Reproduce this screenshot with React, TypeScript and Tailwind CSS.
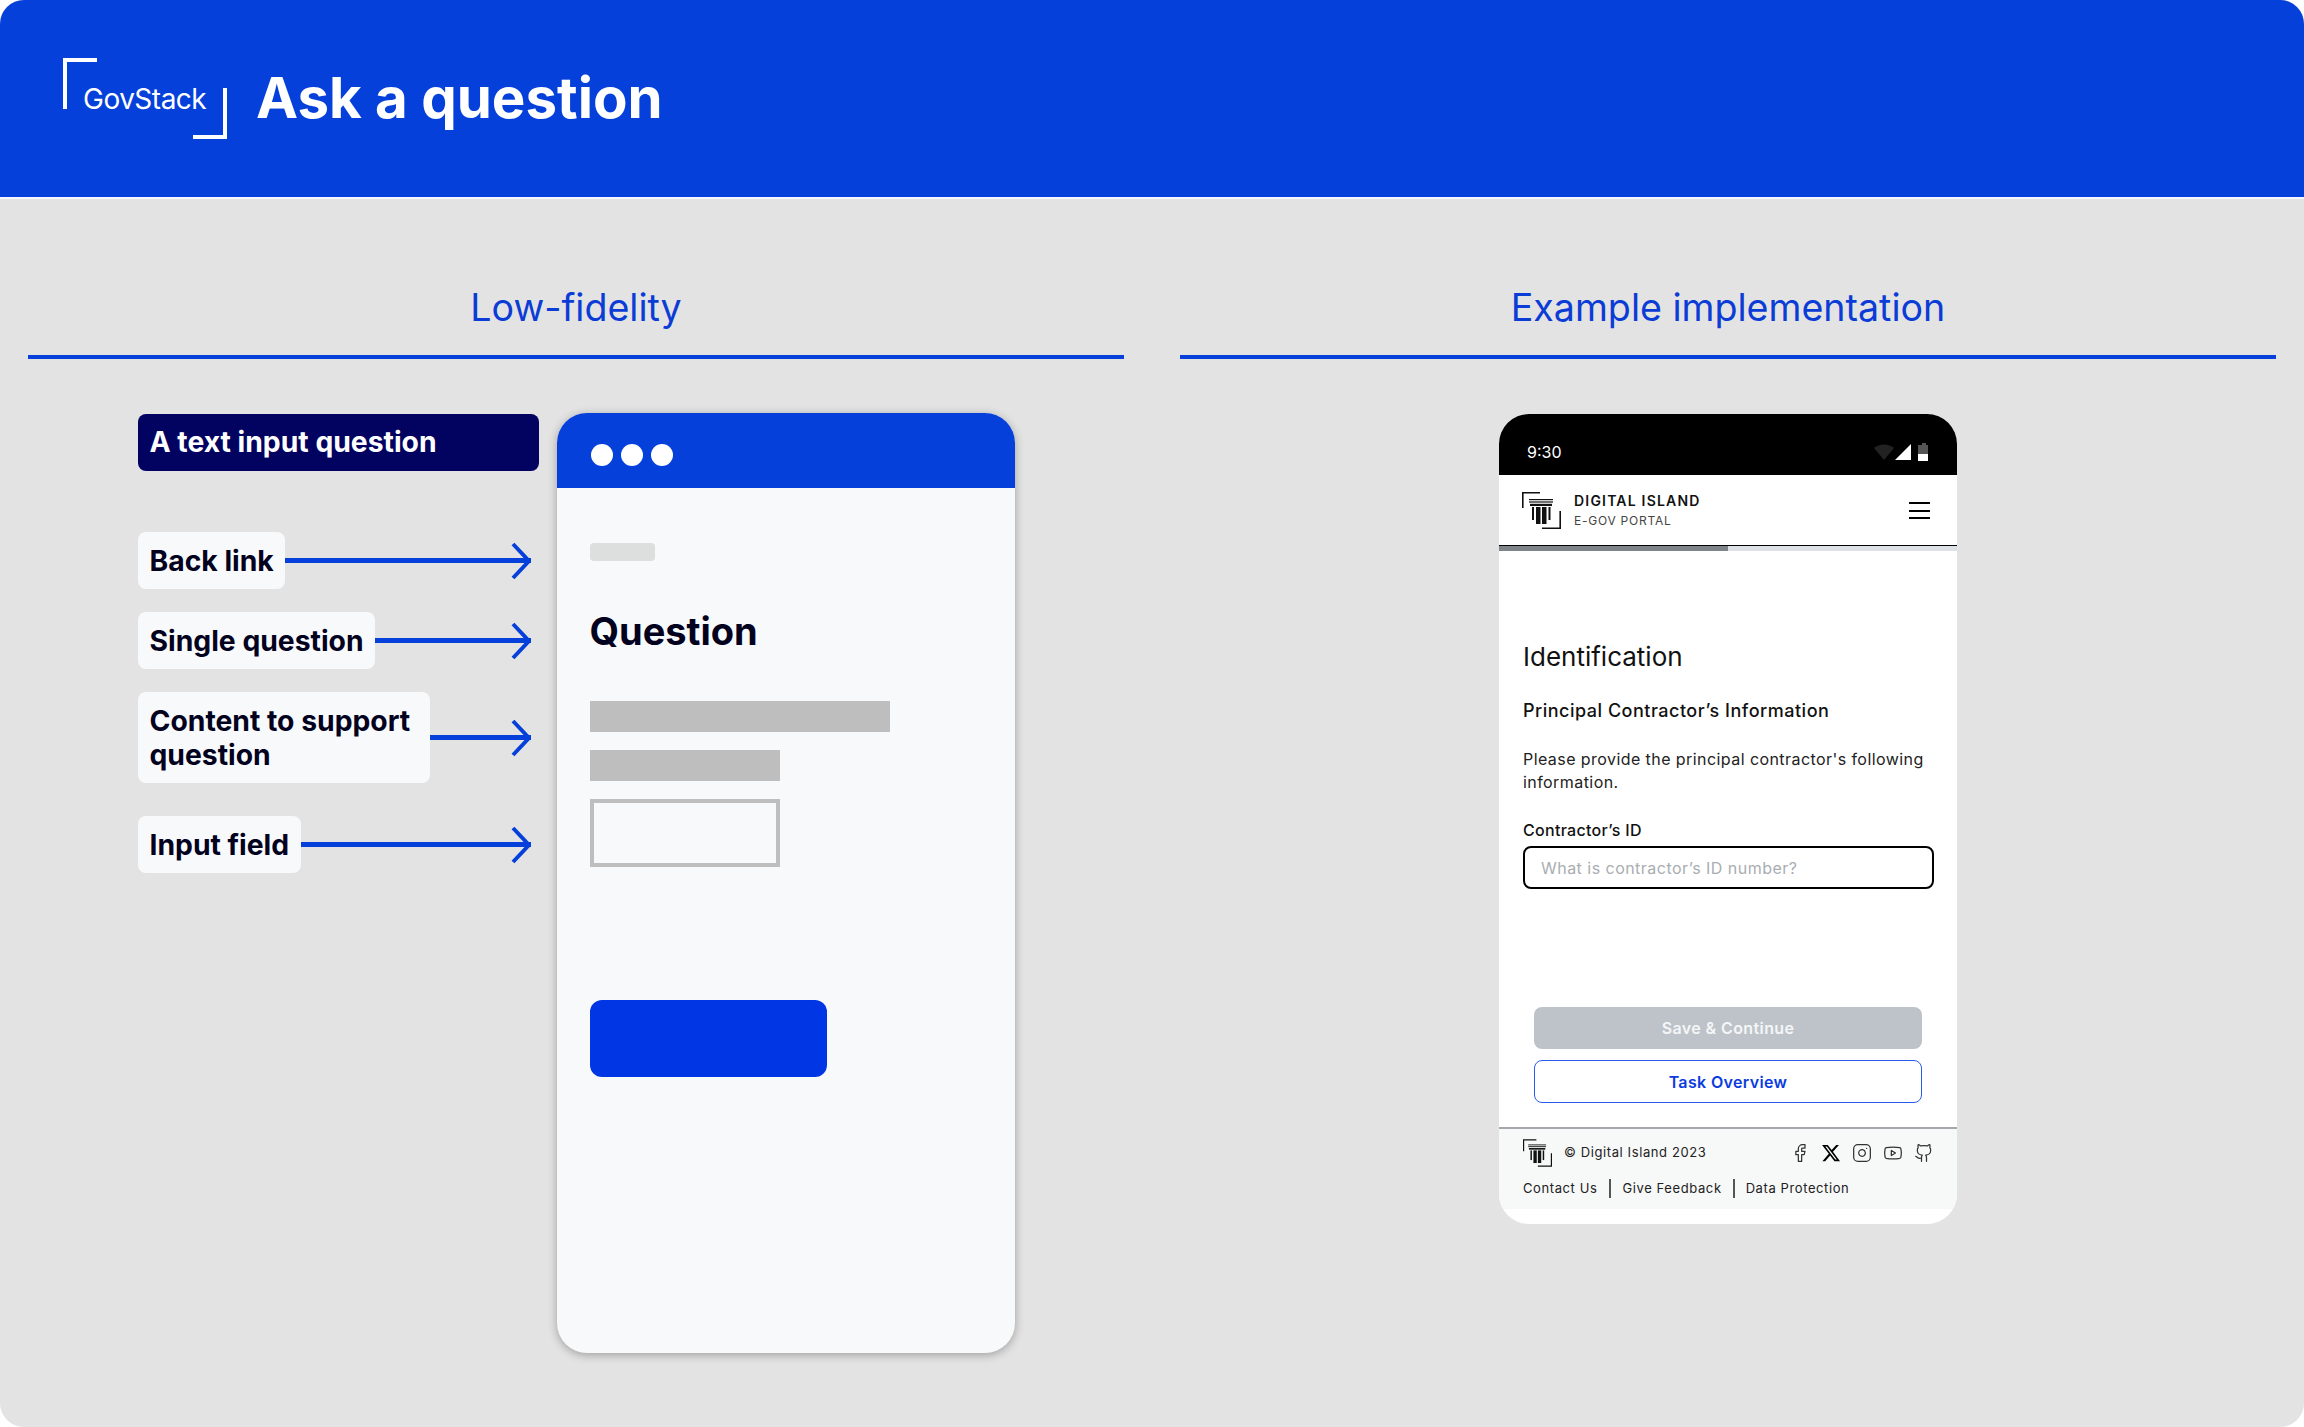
import { Facebook, Instagram, Youtube, Github } from "lucide-react";
import { FaXTwitter } from "react-icons/fa6";

function PortalLogo({ className }: { className: string }) {
  return (
    <svg viewBox="0 0 39 37" className={className} fill="#111">
      <path d="M0 0h18v1.6H1.6V16H0z" />
      <path d="M37.4 19H39v18H20v-1.6h17.4z" />
      <rect x="7" y="7" width="24" height="1.2" />
      <rect x="7" y="9.4" width="24" height="1.2" />
      <rect x="8" y="11.8" width="22" height="2.2" />
      <rect x="10" y="15" width="2" height="13" />
      <rect x="14" y="15" width="4.5" height="17" />
      <rect x="20" y="15" width="4.5" height="17" />
      <rect x="26.5" y="15" width="2" height="13" />
    </svg>
  );
}

function Label({ children, tall }: { children: React.ReactNode; tall?: boolean }) {
  return (
    <div className="flex items-center">
      <div
        className={`flex items-center whitespace-nowrap rounded-lg bg-[#f8f9fb] px-[11.5px] text-[28.3px] font-bold leading-[34px] text-[#02021e] ${
          tall ? "h-[91px] w-[292px]" : "h-[57px]"
        }`}
      >
        <div>{children}</div>
      </div>
      <div className="relative h-[5px] flex-1 bg-[#0540db]">
        <svg
          viewBox="0 0 20 38"
          fill="none"
          stroke="#0540db"
          strokeWidth="4"
          className="absolute -top-[16.5px] right-0 h-[38px] w-5"
        >
          <path d="M2 2l16 17L2 36" />
        </svg>
      </div>
    </div>
  );
}

function LowFidelity() {
  return (
    <div className="mt-[54px] flex items-start pl-[110px]">
      <div className="mt-px w-[401px]">
        <div className="flex h-[57px] items-center rounded-lg bg-[#020260] px-[11.5px] text-[28.3px] font-bold text-white">
          A text input question
        </div>
        <div className="mt-[61px] flex w-[393px] flex-col gap-[23px]">
          <Label>Back link</Label>
          <Label>Single question</Label>
          <Label tall>
            Content to support
            <br />
            question
          </Label>
          <div className="mt-[10px]">
            <Label>Input field</Label>
          </div>
        </div>
      </div>
      <div className="ml-[18px] h-[940px] w-[458px] overflow-hidden rounded-[30px] bg-[#f8f9fb] shadow-[0_2px_10px_rgba(0,0,0,0.3)]">
        <div className="flex h-[75px] items-center gap-2 bg-[#0540db] pl-[34px] pt-[9px]">
          <div className="size-[22px] rounded-full bg-white" />
          <div className="size-[22px] rounded-full bg-white" />
          <div className="size-[22px] rounded-full bg-white" />
        </div>
        <div className="pl-[32.5px] pt-[55px]">
          <div className="h-[18px] w-[65px] rounded-sm bg-[#dddfdf]" />
          <div className="mt-[42px] text-[38px] font-bold leading-[56px] text-[#02021e]">Question</div>
          <div className="mt-[42px] h-[31px] w-[300px] bg-[#bebebe]" />
          <div className="mt-[18px] h-[31px] w-[190px] bg-[#bebebe]" />
          <div className="mt-[18px] h-[68px] w-[190px] border-4 border-[#bebebe]" />
          <div className="mt-[133px] h-[77px] w-[237px] rounded-xl bg-[#0036e3]" />
        </div>
      </div>
    </div>
  );
}

function Example() {
  return (
    <div className="mt-[55px] flex justify-center">
      <div className="h-[810px] w-[458px] overflow-hidden rounded-[30px] bg-white">
        <div className="flex h-[61px] items-center justify-between bg-black pl-[28px] pr-[27px] pt-[15px]">
          <span className="text-base text-white">9:30</span>
          <svg viewBox="0 0 56 18" className="h-[18px] w-14">
            <path d="M0 5a16 16 0 0 1 20 0l-10 12z" fill="#222" />
            <path d="M37 1v16H21z" fill="#fff" />
            <path d="M47 2h2V0h4v2h2v10H45V2z" fill="#555" transform="translate(-1 0)" />
            <path d="M44 11h10v7H44z" fill="#fff" />
          </svg>
        </div>
        <div className="flex h-[71px] items-center justify-between border-b-[1.5px] border-black pl-[23px] pr-[27px] pt-px">
          <div className="flex items-center gap-[13px]">
            <PortalLogo className="h-[37px] w-[39px]" />
            <div>
              <div className="text-sm font-semibold leading-5 tracking-[1.2px] text-[#111]">DIGITAL ISLAND</div>
              <div className="text-xs leading-5 tracking-[0.75px] text-[#444]">E-GOV PORTAL</div>
            </div>
          </div>
          <div className="flex w-[21px] flex-col gap-[5.5px]">
            <div className="h-0.5 bg-black" />
            <div className="h-0.5 bg-black" />
            <div className="h-0.5 bg-black" />
          </div>
        </div>
        <div className="h-[5px] bg-[#dde1e5]">
          <div className="h-full w-[229px] bg-[#7e8488]" />
        </div>
        <div className="px-[24px] pt-[86px]">
          <div className="text-[26px] leading-[40px] text-[#111]">Identification</div>
          <div className="mt-[22px] text-lg font-medium leading-6 tracking-[0.5px] text-[#111]">
            Principal Contractor’s Information
          </div>
          <div className="mt-[25px] text-base leading-[23px] tracking-[0.43px] text-[#222]">
            Please provide the principal contractor's following information.
          </div>
          <div className="mt-[25px] text-base font-medium leading-[23px] tracking-[0.3px] text-[#111]">
            Contractor’s ID
          </div>
          <div className="mt-[4px] flex h-[43px] w-[411px] items-center rounded-lg border-[2.5px] border-black pl-[16px] text-base tracking-[0.47px] text-[#a9adb1]">
            What is contractor’s ID number?
          </div>
          <div className="ml-[11px] mt-[118px] w-[388px]">
            <div className="flex h-[42px] items-center justify-center rounded-lg bg-[#bdc3c9] text-base font-semibold tracking-[0.4px] text-[#f5f6f7]">
              Save &amp; Continue
            </div>
            <div className="mt-[11px] flex h-[43px] items-center justify-center rounded-lg border-[1.5px] border-[#2a5bf0] text-base font-semibold tracking-[0.35px] text-[#0b3ce0]">
              Task Overview
            </div>
          </div>
        </div>
        <div className="mt-[24px] h-[82px] border-t-2 border-[#a5a9ad] bg-[#f7f8f8] pl-[24px] pr-[23px]">
          <div className="flex items-center justify-between pt-[10px]">
            <div className="flex items-center gap-[12px]">
              <PortalLogo className="h-[28px] w-[29px]" />
              <span className="text-[13px] tracking-[0.6px] text-[#222]">© Digital Island 2023</span>
            </div>
            <div className="flex items-center gap-[11px] text-[#333]">
              <Facebook size={20} strokeWidth={1.5} />
              <FaXTwitter size={20} className="text-black" />
              <Instagram size={20} strokeWidth={1.5} />
              <Youtube size={20} strokeWidth={1.5} />
              <Github size={20} strokeWidth={1.5} />
            </div>
          </div>
          <div className="mt-[12px] flex items-center text-[13px] tracking-[0.6px] text-[#222]">
            <span>Contact Us</span>
            <div className="mx-[11.5px] h-[19px] w-0.5 bg-[#555]" />
            <span>Give Feedback</span>
            <div className="mx-[11px] h-[19px] w-0.5 bg-[#555]" />
            <span>Data Protection</span>
          </div>
        </div>
      </div>
    </div>
  );
}

export default function App() {
  return (
    <div className="h-[1427px] w-[2304px] overflow-hidden rounded-[24px] bg-[#e3e3e3] font-['Inter',sans-serif]">
      <header className="flex h-[199px] items-center border-b-2 border-[#f4f6fd] bg-[#0540db] pl-[63px]">
        <div className="relative h-[81px] w-[164px]">
          <div className="absolute left-0 top-0 h-[51px] w-[34px] border-l-4 border-t-4 border-white" />
          <div className="absolute bottom-0 right-0 h-[51px] w-[34px] border-b-4 border-r-4 border-white" />
          <div className="absolute left-[20px] top-[24px] text-[28px] leading-[34px] tracking-[-0.5px] text-white">
            GovStack
          </div>
        </div>
        <h1 className="ml-[29px] text-[56.4px] font-bold text-white">Ask a question</h1>
      </header>
      <main className="grid grid-cols-2 gap-[56px] px-[28px] pt-[85px]">
        <section>
          <div className="border-b-4 border-[#0540db] pb-[23px] text-center text-[37.6px] leading-[48px] text-[#0b3cd6]">
            Low-fidelity
          </div>
          <LowFidelity />
        </section>
        <section>
          <div className="border-b-4 border-[#0540db] pb-[23px] text-center text-[37.6px] leading-[48px] text-[#0b3cd6]">
            Example implementation
          </div>
          <Example />
        </section>
      </main>
    </div>
  );
}
